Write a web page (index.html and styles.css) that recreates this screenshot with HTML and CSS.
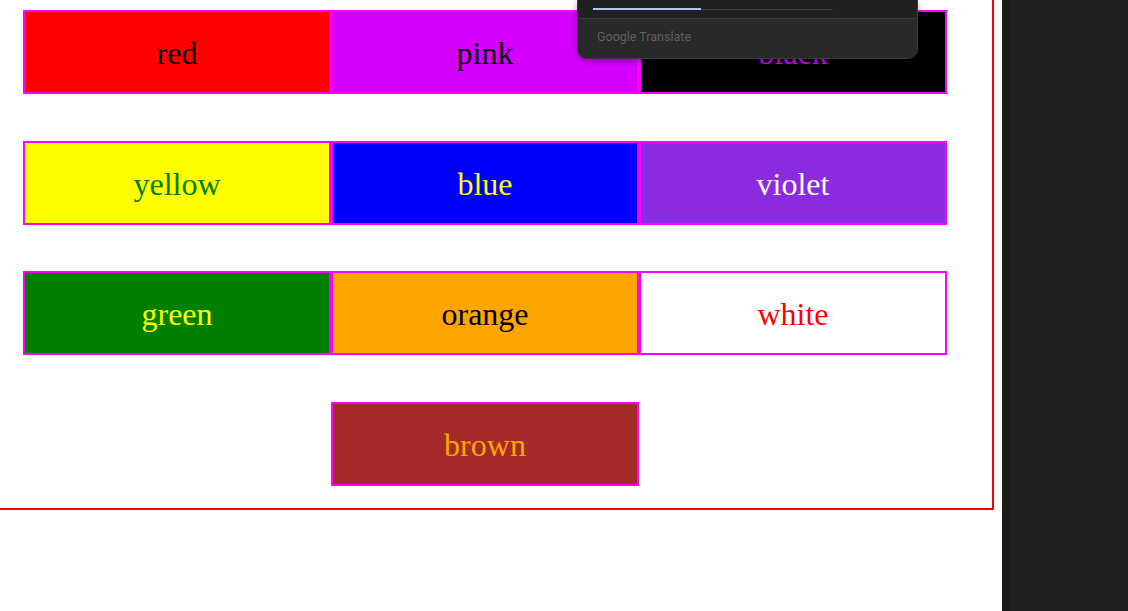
FILE: index.html
```html
<!DOCTYPE html>
<html lang="en">
<head>
<meta charset="utf-8">
<title>Colors</title>
<link rel="stylesheet" href="styles.css">
</head>
<body>
<div class="page">
  <main class="main">
    <div class="frame">
      <div class="grid">
        <div class="box c-red">red</div>
        <div class="box c-pink">pink</div>
        <div class="box c-black">black</div>
        <div class="box c-yellow">yellow</div>
        <div class="box c-blue">blue</div>
        <div class="box c-violet">violet</div>
        <div class="box c-green">green</div>
        <div class="box c-orange">orange</div>
        <div class="box c-white">white</div>
        <div class="box c-brown">brown</div>
      </div>
    </div>
    <div class="translate">
      <div class="tp-head">
        <div class="tp-tabs"><span class="tp-active"></span></div>
      </div>
      <div class="tp-foot">Google Translate</div>
    </div>
  </main>
  <aside class="side"></aside>
</div>
</body>
</html>
```

FILE: styles.css
```css
html, body {
  margin: 0;
  padding: 0;
  background: #fff;
  overflow: hidden;
}

.page {
  display: flex;
  width: 1128px;
  height: 611px;
}

.main {
  position: relative;
  width: 1002px;
  flex: none;
  overflow: hidden;
}

.side {
  flex: 1;
  background: #212121;
  border-left: 8px solid #1b1b1b;
}

.frame {
  box-sizing: border-box;
  width: 1014px;
  margin: -30px 0 0 -20px;
  border: 2px solid #ff0000;
  padding: 38px 0 22px 41px;
}

.grid {
  display: grid;
  grid-template-columns: repeat(3, 308px);
  row-gap: 46.5px;
}

.box {
  box-sizing: border-box;
  height: 84px;
  border: 2px solid #ff00ff;
  padding-top: 3px;
  display: flex;
  align-items: center;
  justify-content: center;
  font-family: "Liberation Serif", "Times New Roman", serif;
  font-size: 32px;
}

.c-red { background: #ff0000; color: #000; }
.c-pink { background: #d600ff; color: #000; }
.c-black { background: #000; color: #d600ff; }
.c-yellow { background: #ffff00; color: #008000; }
.c-blue { background: #0000ff; color: #ffff00; }
.c-violet { background: #8a2be2; color: #fff; }
.c-green { background: #008000; color: #ffff00; }
.c-orange { background: #ffa500; color: #000; }
.c-white { background: #fff; color: #ff0000; }
.c-brown { background: #a52a2a; color: #ffa500; grid-column: 2; }

.translate {
  position: absolute;
  left: 577px;
  top: 0;
  width: 341px;
  box-sizing: border-box;
  border: 1px solid #3d3d3d;
  border-top: none;
  border-radius: 0 0 10px 10px;
  background: #212121;
  box-shadow: 0 2px 6px rgba(0, 0, 0, 0.35);
  overflow: hidden;
}

.tp-head {
  height: 19px;
  border-bottom: 1px solid #3a3a3a;
  padding-left: 15px;
  box-sizing: border-box;
}

.tp-tabs {
  position: relative;
  top: 9px;
  width: 240px;
  height: 1px;
  background: #3c3c3c;
}

.tp-active {
  position: absolute;
  left: 0;
  top: -1px;
  width: 108px;
  height: 2px;
  background: #a8c7fa;
}

.tp-foot {
  box-sizing: border-box;
  height: 39px;
  background: #292929;
  padding: 0 0 4px 19px;
  font-family: Roboto, "Open Sans", sans-serif;
  font-size: 12.5px;
  color: #5f6060;
  display: flex;
  align-items: center;
}
```
